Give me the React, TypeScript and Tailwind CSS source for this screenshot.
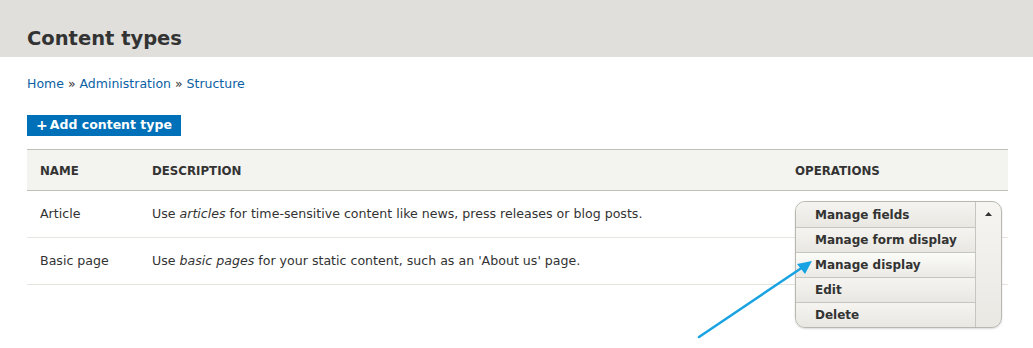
const font = { fontFamily: '"DejaVu Sans", "Liberation Sans", sans-serif' };

const rows = [
  { name: "Article", em: "articles", rest: " for time-sensitive content like news, press releases or blog posts." },
  { name: "Basic page", em: "basic pages", rest: " for your static content, such as an 'About us' page." },
];

const ops = ["Manage fields", "Manage form display", "Manage display", "Edit", "Delete"];

function Dropbutton() {
  return (
    <div className="absolute left-[795px] top-[201px] flex w-[207px] overflow-hidden rounded-[10px] border border-[#b8b8b0] bg-gradient-to-b from-[#f6f5f1] to-[#e9e8e3] shadow-[0_1px_2px_rgba(0,0,0,0.15)]">
      <ul className="flex-1">
        {ops.map((op, i) => (
          <li
            key={op}
            className={`flex h-[25px] items-center pl-[19px] text-[12px] font-bold text-[#333] bg-gradient-to-b ${op === "Manage display" ? "from-[#fbfbf8] to-[#ebeae5]" : "from-[#f5f4f0] to-[#e8e7e2]"} ${i > 0 ? "border-t border-[#c6c5bf]" : ""}`}
          >
            {op}
          </li>
        ))}
      </ul>
      <div className="flex w-[26px] justify-center border-l border-[#c6c5bf] pt-[10px]">
        <svg width="7" height="4" viewBox="0 0 7 4">
          <path d="M0 4 L3.5 0 L7 4 Z" fill="#333" />
        </svg>
      </div>
    </div>
  );
}

export default function App() {
  return (
    <div className="relative h-[348px] w-[1033px] overflow-hidden bg-white text-[#333]" style={font}>
      <div className="h-[57px] bg-[#e0dfdb] px-[27px] pt-[27px]">
        <h1 className="text-[19.5px] font-bold leading-[24px] text-[#333]">Content types</h1>
      </div>

      <div className="px-[27px]">
        <nav className="mt-[19px] text-[12.5px] leading-[16px] text-[#0b5fa5]">
          Home <span className="text-[#333]">»</span> Administration <span className="text-[#333]">»</span> Structure
        </nav>

        <button className="mt-[23px] flex h-[21px] w-[154px] items-center justify-center bg-[#0071b8] text-[12.5px] font-bold text-white">
          <span className="mr-[2px] text-[14px]">+</span>Add content type
        </button>

        <table className="mt-[13px] w-[981px] border-collapse text-left text-[12.6px]">
          <thead>
            <tr className="h-[41px] border-t border-b border-t-[#bfbfba] border-b-[#bfbfba] bg-[#f3f3f0]">
              <th className="w-[125px] pl-[13px] pt-[3px] text-[11.8px] font-bold uppercase text-[#333]">Name</th>
              <th className="pt-[3px] text-[11.8px] font-bold uppercase text-[#333]">Description</th>
              <th className="w-[213px] pt-[3px] text-[11.8px] font-bold uppercase text-[#333]">Operations</th>
            </tr>
          </thead>
          <tbody>
            {rows.map((r) => (
              <tr key={r.name} className="h-[47px] border-b border-[#e6e4df]">
                <td className="pl-[13px] pt-[1px]">{r.name}</td>
                <td className="pt-[1px]">
                  Use <em>{r.em}</em>
                  {r.rest}
                </td>
                <td></td>
              </tr>
            ))}
          </tbody>
        </table>
      </div>

      <Dropbutton />

      <svg className="absolute left-0 top-0" width="1033" height="348">
        <line x1="699" y1="337" x2="803" y2="267" stroke="#1aa3e3" strokeWidth="2.5" strokeLinecap="round" />
        <path d="M812 261 L797 264 L805 274 Z" fill="#1aa3e3" />
      </svg>
    </div>
  );
}
